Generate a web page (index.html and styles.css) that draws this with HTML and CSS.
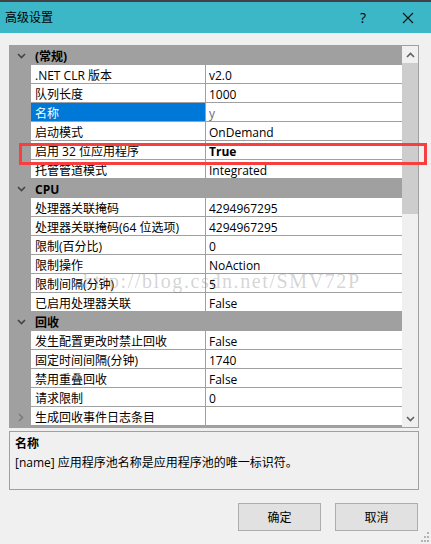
FILE: index.html
```html
<!DOCTYPE html>
<html>
<head>
<meta charset="utf-8">
<link rel="stylesheet" href="styles.css">
</head>
<body>
<div class="titlebar">
  <span class="title">高级设置</span>
  <span class="help">?</span>
  <svg class="close" width="12" height="12" viewBox="0 0 12 12"><path d="M1 1L11 11M11 1L1 11" stroke="#111" stroke-width="1.1" fill="none"/></svg>
</div>
<div class="content">
  <div class="pg">
    <div class="pg-rows">
      <div class="cat"><svg class="chev" width="9" height="6" viewBox="0 0 9 6"><path d="M1 1L4.5 4.5L8 1" stroke="#444" stroke-width="1.6" fill="none"/></svg><span>(常规)</span></div>
      <div class="row"><div class="name">.NET CLR 版本</div><div class="val">v2.0</div></div>
      <div class="row"><div class="name">队列长度</div><div class="val">1000</div></div>
      <div class="row"><div class="name sel">名称</div><div class="val ro">y</div></div>
      <div class="row"><div class="name">启动模式</div><div class="val">OnDemand</div></div>
      <div class="row"><div class="name">启用 32 位应用程序</div><div class="val bold">True</div></div>
      <div class="row"><div class="name">托管管道模式</div><div class="val">Integrated</div></div>
      <div class="cat"><svg class="chev" width="9" height="6" viewBox="0 0 9 6"><path d="M1 1L4.5 4.5L8 1" stroke="#444" stroke-width="1.6" fill="none"/></svg><span>CPU</span></div>
      <div class="row"><div class="name">处理器关联掩码</div><div class="val">4294967295</div></div>
      <div class="row"><div class="name">处理器关联掩码(64 位选项)</div><div class="val">4294967295</div></div>
      <div class="row"><div class="name">限制(百分比)</div><div class="val">0</div></div>
      <div class="row"><div class="name">限制操作</div><div class="val">NoAction</div></div>
      <div class="row"><div class="name">限制间隔(分钟)</div><div class="val">5</div></div>
      <div class="row"><div class="name">已启用处理器关联</div><div class="val">False</div></div>
      <div class="cat"><svg class="chev" width="9" height="6" viewBox="0 0 9 6"><path d="M1 1L4.5 4.5L8 1" stroke="#444" stroke-width="1.6" fill="none"/></svg><span>回收</span></div>
      <div class="row"><div class="name">发生配置更改时禁止回收</div><div class="val">False</div></div>
      <div class="row"><div class="name">固定时间间隔(分钟)</div><div class="val">1740</div></div>
      <div class="row"><div class="name">禁用重叠回收</div><div class="val">False</div></div>
      <div class="row"><div class="name">请求限制</div><div class="val">0</div></div>
      <div class="row sub"><svg class="expander" width="6" height="9" viewBox="0 0 6 9"><path d="M1 1L4.5 4.5L1 8" stroke="#7a7a7a" stroke-width="1.5" fill="none"/></svg><div class="name">生成回收事件日志条目</div><div class="val"></div></div>
    </div>
    <div class="sbar">
      <div class="sb-btn"><svg width="9" height="6" viewBox="0 0 9 6"><path d="M1 5L4.5 1.5L8 5" stroke="#606060" stroke-width="1.6" fill="none"/></svg></div>
      <div class="sb-track"><div class="thumb"></div></div>
      <div class="sb-btn"><svg width="9" height="6" viewBox="0 0 9 6"><path d="M1 1L4.5 4.5L8 1" stroke="#606060" stroke-width="1.6" fill="none"/></svg></div>
    </div>
  </div>
  <div class="desc">
    <div class="desc-title">名称</div>
    <div class="desc-text">[name] 应用程序池名称是应用程序池的唯一标识符。</div>
  </div>
  <div class="buttons">
    <button class="btn">确定</button>
    <button class="btn">取消</button>
  </div>
</div>
<div class="highlight"></div>
<div class="watermark">http://blog.csdn.net/SMV72P</div>
<svg class="grip" width="11" height="11" viewBox="0 0 11 11">
  <rect x="8" y="0" width="2" height="2" fill="#b4b4b4"/>
  <rect x="5" y="4" width="2" height="2" fill="#b4b4b4"/>
  <rect x="8" y="4" width="2" height="2" fill="#b4b4b4"/>
  <rect x="2" y="8" width="2" height="2" fill="#b4b4b4"/>
  <rect x="5" y="8" width="2" height="2" fill="#b4b4b4"/>
  <rect x="8" y="8" width="2" height="2" fill="#b4b4b4"/>
</svg>
</body>
</html>
```
FILE: styles.css
```css
* { box-sizing: border-box; }
html, body { margin: 0; padding: 0; }
body {
  width: 431px;
  height: 544px;
  background: #f0f0f0;
  font-family: "Open Sans", "Noto Sans CJK SC", sans-serif;
  font-size: 12px;
  color: #000;
  position: relative;
  overflow: hidden;
}
.titlebar {
  height: 33px;
  border-top: 2px solid #414146;
  background: #3bb7c7;
  display: flex;
  align-items: center;
  padding: 0 0 0 5px;
}
.title { flex: 1; font-size: 12px; line-height: 16px; }
.help { font-size: 14px; line-height: 16px; margin-right: 36px; }
.close { margin-right: 17px; }
.content { padding: 12px 12px 0 9px; }
.pg {
  width: 410px;
  height: 383px;
  border: 1px solid #a0a0a0;
  display: flex;
  overflow: hidden;
}
.pg-rows {
  width: 392px;
  background: #a0a0a0;
  overflow: hidden;
}
.cat {
  height: 19px;
  display: flex;
  align-items: center;
  font-weight: bold;
  background: #a0a0a0;
}
.cat .chev { margin: 1px 0 0 7px; width: 9px; }
.cat span { margin-left: 9px; line-height: 19px; position: relative; top: 1px; }
.row {
  height: 19px;
  display: flex;
  padding-left: 21px;
  position: relative;
}
.name, .val {
  height: 19px;
  line-height: 18px;
  padding-top: 2px;
  border-bottom: 1px solid #a0a0a0;
  background: #fff;
  white-space: nowrap;
  overflow: hidden;
}
.name {
  width: 175px;
  padding-left: 4px;
  border-right: 1px solid #a0a0a0;
}
.val { flex: 1; padding-left: 3px; }
.sel { background: #0078d7; color: #fff; }
.ro { color: #6d6d6d; }
.bold { font-weight: bold; }
.expander { position: absolute; left: 8px; top: 6px; }
.sbar {
  width: 16px;
  background: #f0f0f0;
  display: flex;
  flex-direction: column;
}
.sb-btn {
  height: 17px;
  display: flex;
  align-items: center;
  justify-content: center;
}
.sb-track { flex: 1; }
.thumb { height: 151px; background: #cdcdcd; }
.desc {
  width: 410px;
  height: 59px;
  margin-top: 3px;
  border: 1px solid #a0a0a0;
  padding: 2px 5px;
  line-height: 19px;
}
.desc-title { font-weight: bold; }
.buttons {
  display: flex;
  justify-content: flex-end;
  gap: 14px;
  margin-top: 13px;
  padding-right: 1px;
}
.btn {
  width: 83px;
  height: 28px;
  background: #e1e1e1;
  border: 1px solid #adadad;
  font-family: "Open Sans", "Noto Sans CJK SC", sans-serif;
  font-size: 12px;
  color: #000;
  padding: 0;
}
.highlight {
  position: absolute;
  left: 19px;
  top: 143px;
  width: 408px;
  height: 22px;
  border: 3px solid #f93e3e;
}
.watermark {
  position: absolute;
  left: 83px;
  top: 271px;
  font-family: "Liberation Serif", serif;
  font-size: 20px;
  line-height: 20px;
  letter-spacing: 1.6px;
  color: rgba(110, 110, 110, 0.3);
  white-space: nowrap;
}
.grip { position: absolute; right: 1px; bottom: 1px; }
```
